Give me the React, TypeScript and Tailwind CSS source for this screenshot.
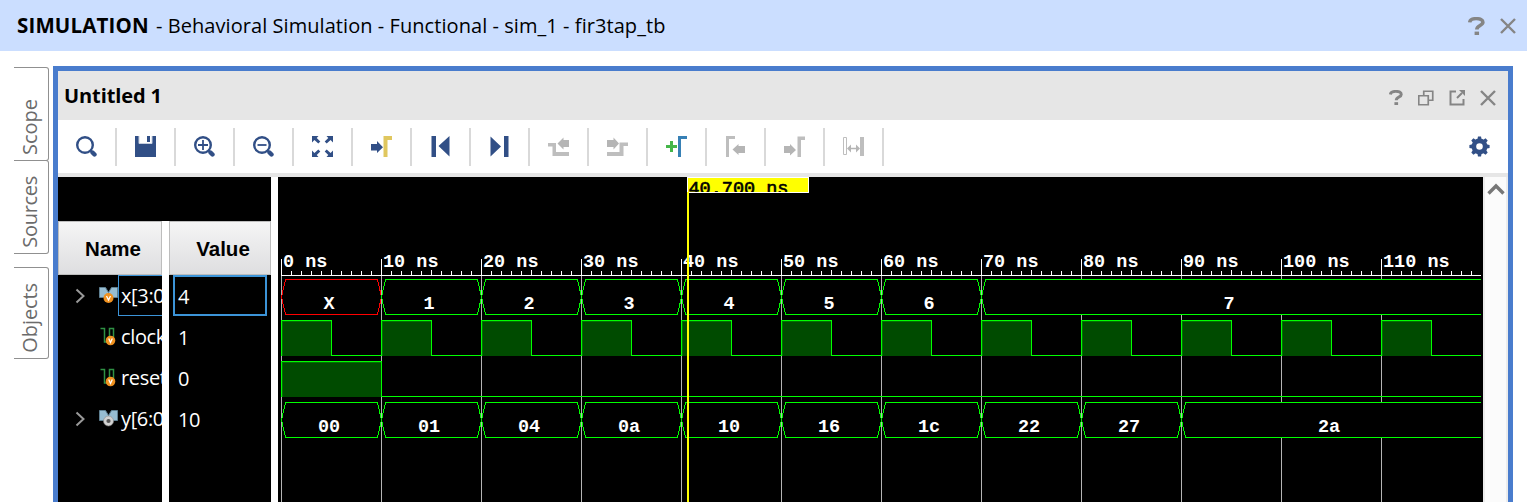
import React from "react";

const NAVY = "#314f86";
const GREY = "#bebebe";

const Svg = ({ children, size = 21 }: { children: React.ReactNode; size?: number }) => (
  <svg width={size} height={size} viewBox="0 0 21 21" fill="none" className="block shrink-0">
    {children}
  </svg>
);

const Lens = ({ children }: { children?: React.ReactNode }) => (
  <Svg>
    <circle cx="9" cy="9" r="7.8" stroke={NAVY} strokeWidth="2.4" />
    <path d="M14.5 14.5l2 2" stroke={NAVY} strokeWidth="2" />
    <path d="M16.5 16.5l2 2" stroke={NAVY} strokeWidth="4.4" strokeLinecap="round" />
    {children}
  </Svg>
);

const tools: React.ReactNode[] = [
  <Lens />,
  <Svg>
    <path d="M0 0h4v8h13V0h4v21H0z" fill={NAVY} />
    <path d="M4 0v7.5h13V0" stroke="#c8d0df" strokeWidth="1" />
    <path d="M12 0h3v6h-3z" fill={NAVY} />
  </Svg>,
  <Lens>
    <path d="M4 9h10M9 4v10" stroke={NAVY} strokeWidth="1.8" />
  </Lens>,
  <Lens>
    <path d="M4.5 9h9" stroke={NAVY} strokeWidth="1.8" />
  </Lens>,
  <Svg>
    <path d="M0 0h6.5L4.700 2l3.600 3.600-2 2L2.400 4 0 6.500zM21 0h-6.500l1.800 2-3.600 3.600 2 2L18.600 4 21 6.500zM0 21h6.500l-1.800-2 3.600-3.600-2-2L2.400 17 0 14.500zM21 21h-6.500l1.800-2-3.600-3.600 2-2L18.600 17 21 14.500z" fill={NAVY} />
  </Svg>,
  <Svg>
    <path d="M0 8h6V5l6 6.300L6 17v-2.500H0z" fill={NAVY} />
    <path d="M12.500 0H21v4h-4.500v17h-4z" fill="#e0c75f" />
  </Svg>,
  <Svg>
    <path d="M1.500 0h4.500v21H1.500zM19.500 0v20.500L8.500 10z" fill={NAVY} />
  </Svg>,
  <Svg>
    <path d="M15 0h4.500v21H15zM1.500 0.500v20L12 10.500z" fill={NAVY} />
  </Svg>,
  <Svg>
    <path d="M0 7h8v9h13v4H4.500v-9.500H0z" fill={GREY} />
    <path d="M9.500 7.500L15.500 1.500v2.500H21v7h-5.500v2.500z" fill="#b5b5b5" />
  </Svg>,
  <Svg>
    <path d="M0 16h12.500V6.500H21v3.500h-4.500v10H0z" fill={GREY} />
    <path d="M12 7.500L6.500 1.500v2.500H0v7h6.500v2.500z" fill="#b5b5b5" />
  </Svg>,
  <Svg>
    <path d="M0 10.500h11M5.500 5v11" stroke="#45b649" strokeWidth="3" />
    <path d="M12 0h9v3h-6v18h-3z" fill="#3780b5" />
  </Svg>,
  <Svg>
    <path d="M1 0h9v3H4v18H1z" fill={GREY} />
    <path d="M7.500 13.500l6-5.500v2h6.500v7h-6.500v2z" fill="#b5b5b5" />
  </Svg>,
  <Svg>
    <path d="M13.500 0.500H21V4h-4v17h-3.500z" fill={GREY} />
    <path d="M12 14L6 8v2H0v7h6v2.500z" fill="#b5b5b5" />
  </Svg>,
  <Svg>
    <path d="M.5 1.500h3v17h-3z" stroke={GREY} />
    <path d="M17 1h4v19h-4z" fill={GREY} />
    <path d="M6 12.500h9" stroke="#b5b5b5" strokeWidth="1.500" />
    <path d="M4 12.500l4-4v8zM17 12.500l-4-4v8z" fill="#b5b5b5" />
  </Svg>,
];

const Gear = () => (
  <Svg>
    <circle cx="10.500" cy="10.500" r="5.600" stroke={NAVY} strokeWidth="4.600" />
    {[0, 45, 90, 135, 180, 225, 270, 315].map((a) => (
      <path key={a} d="M8.300 4l.7-3.600h3l.7 3.600z" fill={NAVY} transform={`rotate(${a} 10.500 10.500)`} />
    ))}
  </Svg>
);

const Cross = () => (
  <svg width="16" height="16" viewBox="0 0 16 16" className="block">
    <path d="M1 1l14 14M15 1L1 15" stroke="#858585" strokeWidth="2.400" />
  </svg>
);

const Help = ({ w, h }: { w: number; h: number }) => (
  <svg width={w} height={h} viewBox="0 0 16 18" preserveAspectRatio="none" className="block">
    <path d="M1.600 5.400C1.900 2.900 4 1.600 7.600 1.600c3.800 0 6.400 1.200 6.400 3.700 0 3.400-5.700 3-5.700 7.100" stroke="#858585" strokeWidth="3.400" fill="none" />
    <path d="M6.200 14.600h4.200V18H6.200z" fill="#858585" />
  </svg>
);

const BusIcon = ({ badge }: { badge: "v" | "dot" }) => (
  <svg width="19" height="18" viewBox="0 0 19 18" className="block shrink-0">
    <path d="M.5.500h6l3 5 3-5h6v10h-4l-5-4-5 4h-4z" fill="#97bdd2" stroke="#5e7f91" />
    {badge === "v" ? (
      <>
        <circle cx="9.500" cy="11" r="5" fill="#f0911f" />
        <path d="M7.500 9l2 4 2-4" stroke="#fff" strokeWidth="1.300" fill="none" />
      </>
    ) : (
      <>
        <circle cx="9.500" cy="11" r="5" fill="#d2d2d2" stroke="#8a8a8a" strokeWidth=".6" />
        <circle cx="9.500" cy="11" r="2.100" fill="#555" />
      </>
    )}
  </svg>
);

const WireIcon = () => (
  <svg width="19" height="19" viewBox="0 0 19 19" className="block shrink-0">
    <path d="M.5 1.500h4v13.500h5V1.500h4v9" stroke="#2f9144" strokeWidth="1.500" fill="none" />
    <circle cx="10.500" cy="13.500" r="4.800" fill="#f0911f" />
    <path d="M8.700 11.500l1.800 4 1.800-4" stroke="#fff" strokeWidth="1.300" fill="none" />
  </svg>
);

const signals = [
  { name: "x[3:0]", value: "4", kind: "x" },
  { name: "clock", value: "1", kind: "wire" },
  { name: "reset", value: "0", kind: "wire" },
  { name: "y[6:0]", value: "10", kind: "y" },
];

type Seg = { from: number; to: number; label: string; unknown?: boolean };

const xBus: Seg[] = [
  { from: 0, to: 10, label: "X", unknown: true },
  { from: 10, to: 20, label: "1" },
  { from: 20, to: 30, label: "2" },
  { from: 30, to: 40, label: "3" },
  { from: 40, to: 50, label: "4" },
  { from: 50, to: 60, label: "5" },
  { from: 60, to: 70, label: "6" },
  { from: 70, to: 120, label: "7" },
];

const yBus: Seg[] = [
  ...["00", "01", "04", "0a", "10", "16", "1c", "22", "27"].map((label, i) => ({ from: i * 10, to: i * 10 + 10, label })),
  { from: 90, to: 120, label: "2a" },
];

const px = (t: number) => 3.5 + t * 10;

const Bus = ({ segs, top }: { segs: Seg[]; top: number }) => (
  <g>
    {segs.map((s) => {
      const a = px(s.from);
      const open = s.to === 120;
      const b = open ? 1203 : px(s.to);
      const mid = top + 17.5;
      const bot = top + 35;
      const d = open
        ? `M${b} ${top}H${a + 4}L${a} ${mid}L${a + 4} ${bot}H${b}`
        : `M${a + 4} ${top}H${b - 4}L${b} ${mid}L${b - 4} ${bot}H${a + 4}L${a} ${mid}z`;
      return (
        <g key={s.from}>
          <path d={d} fill="#000" stroke={s.unknown ? "#f00" : "#0f0"} strokeWidth="1" shapeRendering="crispEdges" />
          <text x={(px(s.from) + px(s.to)) / 2 - 2.5} y={top + 29.5} textAnchor="middle" fill="#fff">
            {s.label}
          </text>
        </g>
      );
    })}
  </g>
);

const High = ({ from, to, top }: { from: number; to: number; top: number }) => (
  <g shapeRendering="crispEdges">
    <rect x={px(from)} y={top} width={px(to) - px(from)} height="35.500" fill="#004b00" />
    <path d={`M${px(from) + 1} ${top + 35}V${top + 1}H${px(to)}`} stroke="#007300" fill="none" />
    <path d={`M${px(from)} ${top + 35}V${top}H${px(to)}V${top + 35}`} stroke="#0f0" fill="none" />
  </g>
);

const tens = Array.from({ length: 12 }, (_, i) => i * 10);
const ones = Array.from({ length: 120 }, (_, i) => i);

const Waves = () => (
  <svg width="1205" height="325" viewBox="0 0 1205 325" className="block shrink-0 bg-black font-['Liberation_Mono',monospace] text-[18.5px] font-bold">
    <g shapeRendering="crispEdges" fill="none">
      {tens.map((t) => (
        <path key={t} d={`M${px(t)} 99V325`} stroke="#b4b4b4" />
      ))}
      {ones.map((t) => (
        <path key={t} d={`M${px(t)} ${t % 10 === 0 ? 82 : t % 5 === 0 ? 93 : 94}V99`} stroke="#fff" />
      ))}
      <path d="M3 98.500H1203" stroke="#fff" />
    </g>
    {tens.map((t) => (
      <text key={t} x={px(t) + 1.500} y="90" fill="#fff">{`${t} ns`}</text>
    ))}
    <Bus segs={xBus} top={102.5} />
    <path d="M3 178.500H1203M103 219.500H1203" stroke="#0f0" shapeRendering="crispEdges" />
    {tens.map((t) => (
      <High key={t} from={t} to={t + 5} top={143.5} />
    ))}
    <High from={0} to={10} top={184.5} />
    <Bus segs={yBus} top={225.5} />
    <path d="M409 0h2v325h-2z" fill="#ff0" />
    <rect x="409.500" y=".5" width="121" height="15" fill="#ff0" stroke="#fff" shapeRendering="crispEdges" />
    <path d="M409 15h2v2h-2z" fill="#ff0" />
    <svg x="409" y="0" width="122" height="15">
      <text x="1.500" y="16.500" fill="#000" className="font-normal" stroke="#000" strokeWidth=".6">40.700 ns</text>
    </svg>
  </svg>
);

const SideTab = ({ label, className, textClass }: { label: string; className: string; textClass: string }) => (
  <div className={`flex w-[35px] items-end justify-center rounded-r-[3px] border-y border-r border-[#909090] pr-[2px] ${className}`}>
    <span className={`rotate-180 text-[20px] leading-[26px] text-[#6b6b6b] [writing-mode:vertical-rl] ${textClass}`}>{label}</span>
  </div>
);

export default function App() {
  return (
    <div className="flex h-[502px] w-[1527px] flex-col overflow-hidden bg-white font-['Open_Sans','Noto_Sans',sans-serif] text-black">
      <header className="flex h-[51px] shrink-0 items-center justify-between bg-[#cbdeff] pl-[17px] pr-[11px]">
        <h1 className="flex items-baseline whitespace-pre text-[20px]">
          <span className="w-[139px] text-[20.5px] font-bold tracking-[0.15px]">SIMULATION</span>
          <span className="tracking-[0.06px]">- Behavioral Simulation - Functional - sim_1 - fir3tap_tb</span>
        </h1>
        <div className="flex items-center gap-[15px]">
          <Help w={17} h={18} />
          <Cross />
        </div>
      </header>
      <div className="flex min-h-0 flex-1">
        <nav className="flex w-[53px] shrink-0 flex-col pl-[14px] pt-[16px]">
          <SideTab label="Scope" className="h-[94px] pb-[5px]" textClass="" />
          <SideTab label="Sources" className="-mt-px h-[94px] pb-[5px]" textClass="tracking-[-0.3px]" />
          <SideTab label="Objects" className="mt-[13px] h-[92px] pb-[5px]" textClass="tracking-[-0.1px]" />
        </nav>
        <main className="mt-[15px] flex w-[1460px] shrink-0 flex-col border-x-[5px] border-t-[5px] border-[#497ccd]">
          <div className="flex h-[49px] shrink-0 items-center justify-between bg-[#e6e6e6] pl-[6px] pr-[12px]">
            <h2 className="text-[20px] font-bold tracking-[-0.1px]">Untitled 1</h2>
            <div className="flex items-center gap-[15px] pt-[4px]">
              <Help w={14} h={15} />
              <svg width="16" height="16" viewBox="0 0 16 16" fill="none" stroke="#858585" strokeWidth="1.700" className="block">
                <path d="M5.750 5.500V1.250h9v9h-4M.75 5.750h9.500v9H.75z" />
              </svg>
              <svg width="16" height="16" viewBox="0 0 16 16" fill="none" className="block">
                <path d="M7 1.500H1.500v13h13V9" stroke="#858585" strokeWidth="2" />
                <path d="M8 8l5-5" stroke="#858585" strokeWidth="2" />
                <path d="M10 0h6v6z" fill="#858585" />
              </svg>
              <Cross />
            </div>
          </div>
          <div className="flex h-[53px] shrink-0 items-center">
            {tools.map((icon, i) => (
              <div key={i} className="flex h-[38px] w-[59px] items-center justify-center border-r-2 border-[#d9d9d9]">
                {icon}
              </div>
            ))}
            <div className="ml-auto mr-[18px]">
              <Gear />
            </div>
          </div>
          <div className="flex min-h-0 flex-1 border-t-4 border-[#e6e6e6]">
            <section className="flex w-[213px] shrink-0 flex-col">
              <div className="h-[44px] shrink-0 bg-black" />
              <div className="flex flex-1 gap-[7px]">
                <div className="flex w-[104px] flex-col overflow-hidden bg-black text-white">
                  <div className="flex h-[54px] shrink-0 items-center justify-center border border-[#bdbdbd] bg-linear-to-b from-[#f5f5f5] to-[#dedee0] pl-[6px] pt-[2px] font-['Liberation_Sans',sans-serif] text-[20.5px] font-bold text-black">
                    Name
                  </div>
                  {signals.map((s) => (
                    <div key={s.name} className="flex h-[41px] w-[140px] shrink-0 items-center">
                      <div className="flex w-[41px] shrink-0 justify-center pl-[3px]">
                        {s.kind !== "wire" && (
                          <svg width="10" height="16" viewBox="0 0 10 16" fill="none">
                            <path d="M1.500 1.500L8.500 8l-7 6.500" stroke="#999" strokeWidth="2" />
                          </svg>
                        )}
                      </div>
                      <div className="flex w-[19px] shrink-0 items-center">
                        {s.kind === "wire" ? <div className="pl-[1px]"><WireIcon /></div> : <BusIcon badge={s.kind === "x" ? "v" : "dot"} />}
                      </div>
                      <div className={`flex h-full w-[90px] shrink-0 items-center border pl-[2px] pt-px text-[20px] tracking-[-0.35px] ${s.kind === "x" ? "border-[#3c94d8]" : "border-transparent"}`}>
                        {s.name}
                      </div>
                    </div>
                  ))}
                </div>
                <div className="flex w-[102px] flex-col bg-black text-white">
                  <div className="flex h-[54px] shrink-0 items-center justify-center border border-[#bdbdbd] bg-linear-to-b from-[#f5f5f5] to-[#dedee0] pl-[6px] pt-[2px] font-['Liberation_Sans',sans-serif] text-[20.5px] font-bold text-black">
                    Value
                  </div>
                  {signals.map((s) => (
                    <div
                      key={s.name}
                      className={`ml-[4px] flex h-[41px] w-[94px] shrink-0 items-center border-2 pl-[3px] pt-[2px] text-[20px] tracking-[-0.5px] ${s.kind === "x" ? "border-[#3c94d8]" : "border-transparent"}`}
                    >
                      {s.value}
                    </div>
                  ))}
                </div>
              </div>
            </section>
            <section className="ml-[7px] w-[1205px] shrink-0">
              <Waves />
            </section>
            <div className="flex flex-1 justify-center border-x-2 border-[#ececec] bg-[#fbfbfb] pt-[6px]">
              <svg width="18" height="12" viewBox="0 0 18 12" fill="none">
                <path d="M1.500 10.500L9 3l7.500 7.500" stroke="#777" strokeWidth="3.400" />
              </svg>
            </div>
          </div>
        </main>
      </div>
    </div>
  );
}
